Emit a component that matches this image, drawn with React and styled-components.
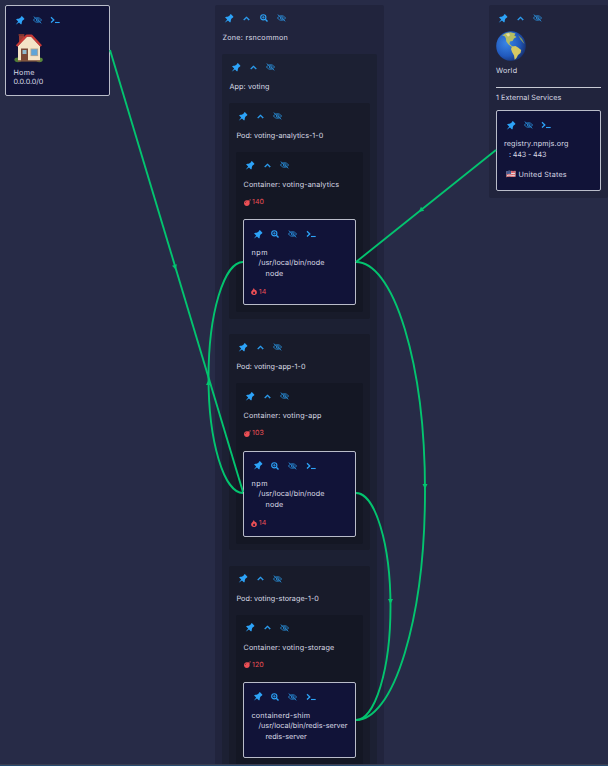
import React from "react";
import styled, { createGlobalStyle } from "styled-components";
import { TiPin } from "react-icons/ti";
import { RiArrowUpSLine } from "react-icons/ri";
import { FaBomb } from "react-icons/fa";

const GlobalStyle = createGlobalStyle`
  * { box-sizing: border-box; }
  body {
    margin: 0;
    background: #272b47;
    color: #dadbe6;
    font-family: Inter, "Liberation Sans", sans-serif;
    font-size: 7.2px;
    line-height: 11px;
    text-rendering: geometricPrecision;
    overflow: hidden;
  }
`;

const Canvas = styled.main`
  position: relative;
  height: 766px;
  overflow: hidden;
`;

const BottomRule = styled.div`
  position: absolute;
  inset: auto 0 0 0;
  height: 2px;
  border-top: 1px solid #3b3d50;
  background: #24496f;
`;

const Placed = styled.div`
  position: absolute;
  left: ${(p) => p.$x}px;
  top: ${(p) => p.$y}px;
  width: ${(p) => p.$w}px;
`;

const levels = {
  zone: "#21243d",
  app: "#1c2033",
  pod: "#181b2a",
  container: "#141724",
};

const Group = styled.section`
  display: flex;
  flex: none;
  flex-direction: column;
  padding: 0 7px 7px;
  background: ${(p) => levels[p.$level]};
  border-radius: 2px;
  height: ${(p) => (p.$h ? `${p.$h}px` : "auto")};
`;

const PodStack = styled.div`
  display: flex;
  flex-direction: column;
  gap: 15.3px;
`;

const Process = styled.article`
  display: flex;
  flex-direction: column;
  height: ${(p) => p.$h}px;
  flex: none;
  padding: 1px 7px 0;
  border: 1px solid #b9bcc9;
  border-radius: 2px;
  background: #111338;
`;

const IconRow = styled.div`
  display: flex;
  flex: none;
  align-items: center;
  height: 26px;
  margin-left: -2px;
`;

const IconCell = styled.span`
  display: flex;
  flex: none;
  align-items: center;
  justify-content: center;
  width: 17.6px;
  color: #2da3f8;
  opacity: ${(p) => (p.$dim ? 0.85 : 1)};
  font-size: ${(p) => p.$size}px;
`;

const Label = styled.div`
  flex: none;
  height: 11px;
  white-space: nowrap;
  letter-spacing: ${(p) => p.$ls ?? 0.26}px;
  margin: ${(p) => p.$m ?? "0"};
`;

const GroupLabel = styled(Label)`
  margin: 1px 0 11px 0.5px;
`;

const Alert = styled.div`
  display: flex;
  flex: none;
  align-items: center;
  gap: 1.5px;
  height: 11px;
  color: #ec4f55;
  font-size: 7px;
  letter-spacing: 0.1px;
  margin: ${(p) => p.$m};
  svg {
    font-size: 7px;
    margin-top: 1.6px;
  }
`;

const Rule = styled.hr`
  width: 105px;
  height: 1px;
  margin: 11px 0 4px;
  border: 0;
  background: #c8cad4;
`;

const Country = styled.div`
  display: flex;
  align-items: center;
  gap: 3px;
  margin: 9px 0 0 1.5px;
`;

const Edges = styled.svg`
  position: absolute;
  inset: 0;
  pointer-events: none;
`;

function ZoomIcon() {
  return (
    <svg width="8" height="8" viewBox="0 0 8 8" fill="none" stroke="currentColor">
      <circle cx="3.300" cy="3.300" r="2.600" strokeWidth="1.100" />
      <path d="M5.300 5.300L7.500 7.500" strokeWidth="1.400" />
      <path d="M1.900 3.300h2.800M3.300 1.900v2.800" strokeWidth=".7" />
    </svg>
  );
}

function EyeOffIcon() {
  return (
    <svg width="9" height="8" viewBox="0 0 9 8" fill="none" stroke="currentColor" strokeWidth=".8">
      <path d="M.5 4C2.300.9 6.700.9 8.500 4C6.700 7.100 2.300 7.100.5 4z" />
      <circle cx="4.700" cy="4" r="1.400" />
      <path d="M.7.6L8.300 7.300" strokeWidth=".9" />
    </svg>
  );
}

function TerminalIcon() {
  return (
    <svg width="10" height="8" viewBox="0 0 10 8" fill="none" stroke="currentColor">
      <path d="M1 1.300L3.800 3.900L1 6.500" strokeWidth="1.300" />
      <path d="M5 6.500h4.700" strokeWidth="1.100" />
    </svg>
  );
}

const icons = {
  pin: [TiPin, 13, 0],
  up: [RiArrowUpSLine, 11, 1],
  zoom: [ZoomIcon],
  eye: [EyeOffIcon],
  term: [TerminalIcon],
};

function Icons({ names }) {
  return (
    <IconRow>
      {names.map((name) => {
        const [Glyph, size = 9, stroke = 0] = icons[name];
        return (
          <IconCell key={name} $size={size} $dim={name === "eye"}>
            <Glyph strokeWidth={stroke} stroke="currentColor" />
          </IconCell>
        );
      })}
    </IconRow>
  );
}

function House() {
  return (
    <svg width="30" height="30" viewBox="-1 0 30 30">
      <ellipse cx="4" cy="26.8" rx="3.6" ry="2.4" fill="#4f7a35" />
      <ellipse cx="25.4" cy="26.8" rx="3.4" ry="2.4" fill="#5a883b" />
      <path d="M5 2h5v8H5z" fill="#9c3a33" />
      <path d="M4.6 1h5.8v1.8H4.6z" fill="#7b3431" />
      <path d="M4 13L13 3.500h4L26 13v15H4z" fill="#f4e3c6" />
      <path d="M2.600 13L12.800 2.600h4.600L27.200 13" fill="none" stroke="#c93a36" strokeWidth="2.2" strokeLinejoin="round" />
      <path d="M7 15.5h7V28H7z" fill="#794736" />
      <path d="M8.5 17h4v4h-4z" fill="#8fb9cf" />
      <path d="M16.5 15.500h7.6v7.6h-7.6z" fill="#bba58a" />
      <path d="M17.3 16.3h6v6h-6z" fill="#5fa5d8" />
      <path d="M4 27.2h22V28.6H4z" fill="#82583f" />
    </svg>
  );
}

function Globe() {
  return (
    <svg width="30" height="30" viewBox="0 0 30 30">
      <defs>
        <radialGradient id="ocean" cx=".35" cy=".4" r=".68">
          <stop offset="0" stopColor="#3a86e6" />
          <stop offset=".65" stopColor="#2159bd" />
          <stop offset="1" stopColor="#173273" />
        </radialGradient>
      </defs>
      <circle cx="15" cy="15" r="14.8" fill="url(#ocean)" />
      <path d="M6 4.5L10 2l4.500-.8 5 1.200-1.200 2 2.200 1.600-2.500 1.500-1.500 2.500-2.500.5-.5 2.200 2 2 1.800 1.500-2-.5-3-2.500-2-2.700-.5-3.500-1.500-2z" fill="#b7bd62" />
      <path d="M22 4l4 4 2.500 5-1.500-1.500-2.500-3z" fill="#8a9c63" />
      <path d="M16 15.500l3.500-.5 2.500 1.500 3.200 2.500-.7 3-2.500 2-1.500 3-1.800 1.800-.7-4.300-2-3.500-1-3z" fill="#d6c862" />
      <path d="M10 3l3-.8 1 2-2 1.500z" fill="#e5e0a4" />
    </svg>
  );
}

function Flag() {
  return (
    <svg width="10" height="8" viewBox="0 0 10 8">
      <path d="M.5 1.300Q3 .2 5 1t4.500 0v5.500Q7 7.500 5 6.800t-4.500.4z" fill="#e6dcdf" />
      <path d="M.5 2.800Q3 1.700 5 2.300t4.500 0M.5 4.800Q3 3.700 5 4.300t4.500 0M.5 6.600Q3 5.700 5 6.200t4.500 0M5 1.200q2 .5 4.500 0" fill="none" stroke="#d8535b" strokeWidth=".9" />
      <path d="M.5 1.300Q3 .2 5 1v3Q3 3.600.5 4.300z" fill="#43598f" />
    </svg>
  );
}

function Flame() {
  return (
    <svg width="6" height="7" viewBox="0 0 6 7">
      <path fillRule="evenodd" fill="currentColor" d="M2.700 0C3.600.9 3.400 1.700 4.300 2.200L4.700 1.700C5.400 2.500 5.900 3.300 5.900 4.300A2.900 2.700 0 0 1 .1 4.300C.1 2.700 2.400 1.900 2.700 0zM3.100 3.200C2.800 4 2.100 4.200 2.100 5A1 1 0 0 0 4.100 5C4.100 4.200 3.500 4 3.100 3.200z" />
    </svg>
  );
}

const pods = [
  {
    name: "voting-analytics", podLs: 0.03, containerLs: 0.15, bombs: 140, flames: 14, h: 86,
    lines: [["npm", 0.6], ["/usr/local/bin/node", 0.08], ["node", 0.2]],
  },
  {
    name: "voting-app", podLs: 0.02, containerLs: 0.18, bombs: 103, flames: 14, h: 86,
    lines: [["npm", 0.6], ["/usr/local/bin/node", 0.08], ["node", 0.2]],
  },
  {
    name: "voting-storage", podLs: 0.04, containerLs: 0.15, bombs: 120, h: 76,
    lines: [["containerd-shim", 0.21], ["/usr/local/bin/redis-server", 0], ["redis-server", -0.04]],
  },
];

const indents = ["-.300px 0 0 .5px", "-.900px 0 0 7.500px", "0 0 0 14.500px"];

function Pod({ pod }) {
  return (
    <Group $level="pod" $h={216}>
      <Icons names={["pin", "up", "eye"]} />
      <GroupLabel $ls={pod.podLs}>Pod: {pod.name}-1-0</GroupLabel>
      <Group $level="container">
        <Icons names={["pin", "up", "eye"]} />
        <GroupLabel $ls={pod.containerLs}>Container: {pod.name}</GroupLabel>
        <Alert $m="-5px 0 12.300px .5px">
          <FaBomb />
          {pod.bombs}
        </Alert>
        <Process $h={pod.h}>
          <Icons names={["pin", "zoom", "eye", "term"]} />
          {pod.lines.map(([line, ls], i) => (
            <Label key={line} $ls={ls} $m={indents[i]}>{line}</Label>
          ))}
          {pod.flames && (
            <Alert $m="6.500px 0 0 .3px">
              <Flame />
              {pod.flames}
            </Alert>
          )}
        </Process>
      </Group>
    </Group>
  );
}

const edges = [
  "M110 50L243 492",
  "M356 262L496 150",
  "M243 262A34.500 115.500 0 0 0 243 493",
  "M356 262A69 229 0 0 1 356 720",
  "M356 493A34.500 113.500 0 0 1 356 720",
];

const arrows = [
  [175, 267, 73],
  [421, 210, 141],
  [208.5, 383, -90],
  [425, 486, 90],
  [390.5, 601, 90],
];

export default function App() {
  return (
    <Canvas>
      <GlobalStyle />
      <Placed $x={5} $y={5} $w={105}>
        <Process $h={91}>
          <Icons names={["pin", "eye", "term"]} />
          <House />
          <Label $m="3.500px 0 0 .5px">Home</Label>
          <Label $ls={-0.08} $m="-1.600px 0 0 .5px">0.0.0.0/0</Label>
        </Process>
      </Placed>
      <Placed $x={215} $y={5} $w={169}>
        <Group $level="zone" $h={780}>
          <Icons names={["pin", "up", "zoom", "eye"]} />
          <GroupLabel>Zone: rsncommon</GroupLabel>
          <Group $level="app" $h={760}>
            <Icons names={["pin", "up", "eye"]} />
            <GroupLabel $ls={0.12}>App: voting</GroupLabel>
            <PodStack>
              {pods.map((pod) => (
                <Pod key={pod.name} pod={pod} />
              ))}
            </PodStack>
          </Group>
        </Group>
      </Placed>
      <Placed $x={489} $y={5} $w={119}>
        <Group $level="zone" $h={193}>
          <Icons names={["pin", "up", "eye"]} />
          <Globe />
          <Label $m="4px 0 0 0">World</Label>
          <Rule />
          <Label $ls={0.06} $m="0 0 7px 0">1 External Services</Label>
          <Process $h={81}>
            <Icons names={["pin", "eye", "term"]} />
            <Label $ls={0.17}>registry.npmjs.org</Label>
            <Label $ls={-0.14} $m="-.500px 0 0 5px">: 443 - 443</Label>
            <Country>
              <Flag />
              <Label $ls={0.22}>United States</Label>
            </Country>
          </Process>
        </Group>
      </Placed>
      <Edges width="608" height="766" viewBox="0 0 608 766">
        {edges.map((d) => (
          <path key={d} d={d} fill="none" stroke="#03c46f" strokeWidth="1.9" />
        ))}
        {arrows.map(([x, y, angle]) => (
          <path key={`${x}-${y}`} d="M-2-2.500L3 0L-2 2.500z" fill="#03c46f" transform={`translate(${x} ${y}) rotate(${angle})`} />
        ))}
      </Edges>
      <BottomRule />
    </Canvas>
  );
}
